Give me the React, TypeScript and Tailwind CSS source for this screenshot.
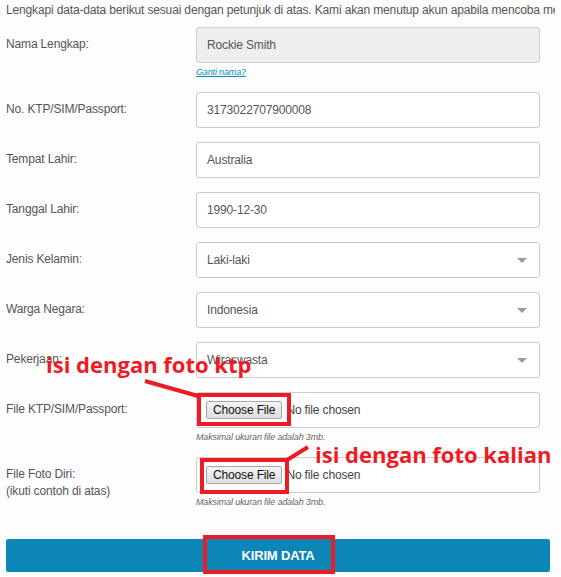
import React from "react";

type Row = {
  label: string[];
  kind: "text" | "select" | "file";
  value?: string;
  disabled?: boolean;
  helper?: React.ReactNode;
};

const ROWS: Row[] = [
  {
    label: ["Nama Lengkap:"],
    kind: "text",
    value: "Rockie Smith",
    disabled: true,
    helper: (
      <a className="italic underline text-[#0a8ac4]" href="#">
        Ganti nama?
      </a>
    ),
  },
  { label: ["No. KTP/SIM/Passport:"], kind: "text", value: "3173022707900008" },
  { label: ["Tempat Lahir:"], kind: "text", value: "Australia" },
  { label: ["Tanggal Lahir:"], kind: "text", value: "1990-12-30" },
  { label: ["Jenis Kelamin:"], kind: "select", value: "Laki-laki" },
  { label: ["Warga Negara:"], kind: "select", value: "Indonesia" },
  { label: ["Pekerjaan:"], kind: "select", value: "Wiraswasta" },
  {
    label: ["File KTP/SIM/Passport:"],
    kind: "file",
    helper: <span className="italic text-[#666]">Maksimal ukuran file adalah 3mb.</span>,
  },
  {
    label: ["File Foto Diri:", "(ikuti contoh di atas)"],
    kind: "file",
    helper: <span className="italic text-[#666]">Maksimal ukuran file adalah 3mb.</span>,
  },
];

function Field({ row }: { row: Row }) {
  const base =
    "h-[36px] w-[344px] rounded-[3px] border border-[#cccccc] flex items-center text-[12px] text-[#555]";
  if (row.kind === "file") {
    return (
      <div className={`${base} bg-white pl-[9px]`}>
        <span className="h-[18px] px-[6px] flex items-center rounded-[2px] border border-[#a6a6a6] bg-gradient-to-b from-[#f4f4f4] to-[#dedede] text-[#111] text-[12px]">
          Choose File
        </span>
        <span className="ml-[4px] text-[#444]">No file chosen</span>
      </div>
    );
  }
  return (
    <div className={`${base} pl-[10px] pr-[12px] ${row.disabled ? "bg-[#eeeeee]" : "bg-white"}`}>
      <span className="flex-1">{row.value}</span>
      {row.kind === "select" && (
        <span className="w-0 h-0 border-l-[5px] border-r-[5px] border-t-[5px] border-l-transparent border-r-transparent border-t-[#999]" />
      )}
    </div>
  );
}

export default function App() {
  return (
    <div
      className="relative w-[561px] h-[577px] overflow-hidden bg-[#fdfdfd] text-[#555] tracking-[-0.15px]"
      style={{ fontFamily: '"Liberation Sans", Arial, sans-serif' }}
    >
      <div className="px-[6px]">
        <p className="h-[22px] pt-[2px] text-[12px] leading-[16px] whitespace-nowrap overflow-hidden">
          Lengkapi data-data berikut sesuai dengan petunjuk di atas. Kami akan menutup akun apabila mencoba memalsukan data.
        </p>

        <div className="mt-[5px] flex flex-col gap-[14px]">
          {ROWS.map((row) => (
            <div key={row.label[0]} className="flex">
              <div className="w-[190px] pt-[9px] text-[12px] leading-[17px] text-[#555]">
                {row.label.map((l) => (
                  <div key={l}>{l}</div>
                ))}
              </div>
              <div className="flex flex-col">
                <Field row={row} />
                {row.helper && (
                  <div className="h-[15px] pt-[3px] text-[9px] leading-[12px]">{row.helper}</div>
                )}
              </div>
            </div>
          ))}
        </div>

        <button className="mt-[31px] w-[544px] h-[33px] rounded-[2px] bg-[#0b86b6] text-white font-bold text-[13px]">
          KIRIM DATA
        </button>
      </div>

      {/* annotations */}
      <svg className="absolute inset-0 pointer-events-none" width="561" height="577">
        <line x1="145" y1="381" x2="198" y2="396" stroke="#ed1c24" strokeWidth="4" />
        <line x1="287" y1="460" x2="308" y2="447" stroke="#ed1c24" strokeWidth="4" />
      </svg>
      <div className="absolute left-[197px] top-[393px] w-[94px] h-[33px] border-4 border-[#ed1c24]" />
      <div className="absolute left-[200px] top-[458px] w-[89px] h-[36px] border-4 border-[#ed1c24]" />
      <div className="absolute left-[203px] top-[535px] w-[132px] h-[39px] border-4 border-[#ed1c24]" />
      <span
        className="absolute left-[46px] top-[349px] text-[22px] font-bold leading-[30px] tracking-normal text-[#ed1c24] whitespace-nowrap"
        style={{ fontFamily: '"Open Sans", sans-serif' }}
      >
        isi dengan foto ktp
      </span>
      <span
        className="absolute left-[315px] top-[439px] text-[22px] font-bold leading-[30px] tracking-normal text-[#ed1c24] whitespace-nowrap"
        style={{ fontFamily: '"Open Sans", sans-serif' }}
      >
        isi dengan foto kalian
      </span>
    </div>
  );
}
